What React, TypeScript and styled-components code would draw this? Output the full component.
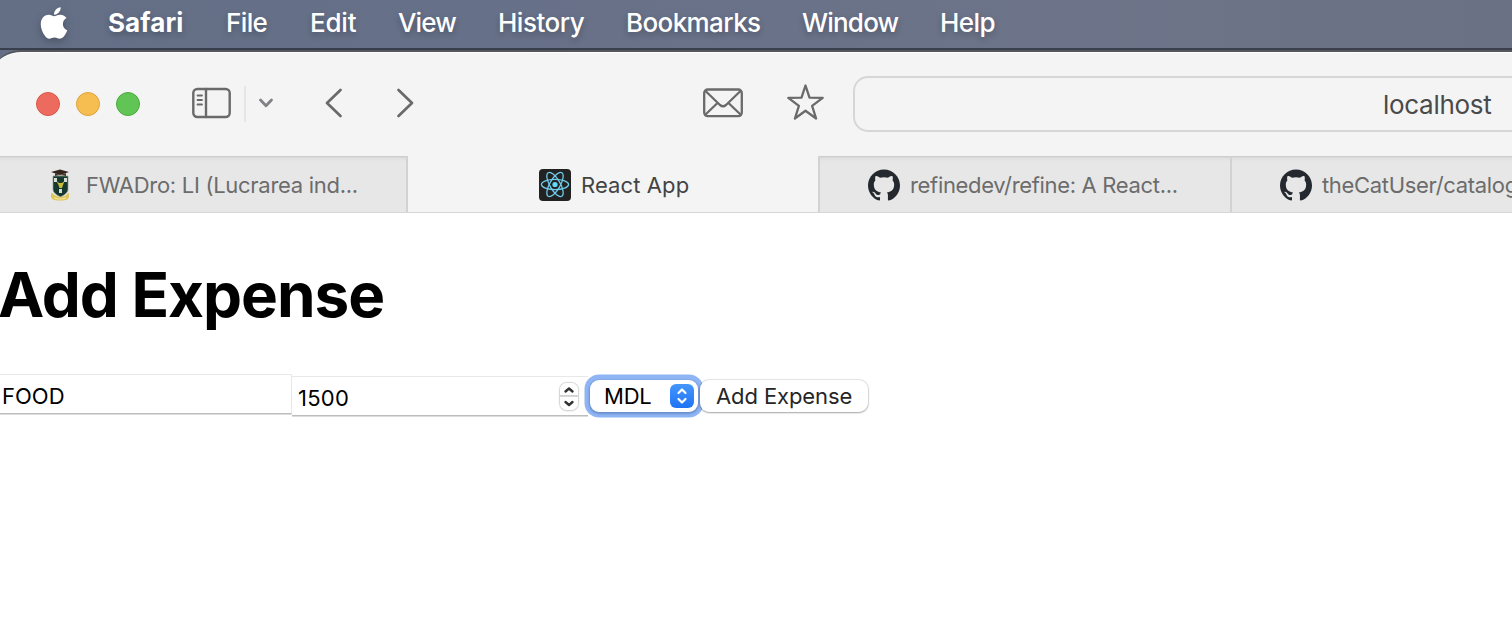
import React from "react";
import styled, { createGlobalStyle } from "styled-components";
import { SiGithub } from "react-icons/si";
import { FaApple } from "react-icons/fa";

const GlobalStyle = createGlobalStyle`
  * { box-sizing: border-box; }
  html, body { margin: 0; padding: 0; overflow: hidden; }
  body { background: #fff; font-family: Inter, "Liberation Sans", sans-serif; }
`;

const Screen = styled.div`
  width: 100%;
  height: 622px;
  overflow: hidden;
  display: flex;
  flex-direction: column;
  background: #fff;
`;

const Desktop = styled.div`
  flex: none;
  background: linear-gradient(90deg, #646f86 0%, #667088 30%, #6d7489 70%, #6b7184 100%);
`;

const MenuBar = styled.nav`
  height: 50px;
  display: flex;
  align-items: flex-start;
  padding: 0 0 0 40px;
  color: #fff;
  box-shadow: inset 0 -2px 0 rgba(20, 22, 30, 0.55);
`;

const AppleMark = styled.span`
  width: 68px;
  padding-top: 5px;
  filter: drop-shadow(0 3px 4px rgba(0, 0, 0, 0.25));
  svg { display: block; margin-left: -4px; }
`;

const MenuItem = styled.span<{ $w: number; $ls?: number; $bold?: boolean }>`
  width: ${(p) => p.$w}px;
  flex: none;
  font-size: 26px;
  line-height: 46px;
  white-space: nowrap;
  font-weight: ${(p) => (p.$bold ? 700 : 500)};
  letter-spacing: ${(p) => p.$ls ?? 0}px;
  text-shadow: 0 3px 6px rgba(0, 0, 0, 0.25);
`;

const WindowTop = styled.header`
  margin-left: -4px;
  padding-left: 4px;
  height: 106px;
  background: #f4f4f4;
  border-top: 2px solid #55575c;
  border-top-left-radius: 26px 18px;
  box-shadow: inset 0 1px 0 #fff;
  display: flex;
  align-items: center;
`;

const Lights = styled.div`
  flex: none;
  display: flex;
  gap: 16px;
  margin-left: 36px;
  width: 156px;
`;

const Light = styled.i<{ $fill: string; $edge: string }>`
  width: 24px;
  height: 24px;
  border-radius: 50%;
  background: ${(p) => p.$fill};
  border: 1px solid ${(p) => p.$edge};
`;

const ToolIcon = styled.svg<{ $gap?: number; $lift?: number; $soft?: boolean }>`
  flex: none;
  display: block;
  margin-left: ${(p) => p.$gap ?? 0}px;
  margin-bottom: ${(p) => p.$lift ?? 2}px;
  fill: none;
  stroke: ${(p) => (p.$soft ? "#828286" : "#6a6a6a")};
  stroke-linecap: round;
  stroke-linejoin: round;
`;

const Divider = styled.i`
  flex: none;
  width: 2px;
  height: 36px;
  margin-left: 13px;
  background: #e6e6e6;
`;

const AddressBar = styled.div`
  flex: none;
  width: 1200px;
  height: 56px;
  margin-left: 28px;
  border: 2px solid #d6d6d6;
  border-radius: 15px;
  padding-left: 528px;
  font-size: 26px;
  line-height: 54px;
  letter-spacing: -0.3px;
  color: #4a4a4a;
`;

const TabStrip = styled.div`
  flex: none;
  height: 57px;
  display: flex;
  border-bottom: 1px solid #d6d6d6;
  background: #f4f4f4;
`;

const Tab = styled.div<{ $w: number; $pad: number; $gap: number; $active?: boolean; $edge?: boolean }>`
  flex: none;
  width: ${(p) => p.$w}px;
  padding: 2px 0 0 ${(p) => p.$pad}px;
  display: flex;
  align-items: center;
  gap: ${(p) => p.$gap}px;
  background: ${(p) =>
    p.$active ? "#f4f4f4" : "linear-gradient(#c6c6c6 0, #d4d4d4 1px, #dedede 2px, #e4e4e4 4px, #e7e7e7 7px)"};
  border-right: ${(p) => (p.$edge ? "2px solid #d2d2d2" : "none")};
  color: ${(p) => (p.$active ? "#434343" : "#6c6c6c")};
  svg { flex: none; display: block; }
`;

const TabTitle = styled.span<{ $ls?: number }>`
  font-size: 22px;
  line-height: 54px;
  white-space: nowrap;
  letter-spacing: ${(p) => p.$ls ?? 0}px;
`;

const Page = styled.main`
  flex: 1;
  background: #fff;
  color: #000;
`;

const Title = styled.h1`
  margin: 42px 0 39px -2px;
  height: 80px;
  font-size: 62px;
  line-height: 80px;
  font-weight: 700;
  letter-spacing: -1.05px;
`;

const Form = styled.form`
  display: flex;
  align-items: flex-start;
`;

const Field = styled.div<{ $w: number; $drop: number; $pad: number; $open?: boolean }>`
  flex: none;
  width: ${(p) => p.$w}px;
  height: 40px;
  margin-top: ${(p) => p.$drop}px;
  padding-left: ${(p) => p.$pad}px;
  padding-right: 10px;
  display: flex;
  align-items: center;
  justify-content: space-between;
  border-top: 1px solid #e8e8e8;
  border-right: ${(p) => (p.$open ? "none" : "1px solid #e8e8e8")};
  border-bottom: 1px solid #bdbdbd;
  box-shadow: 0 1px 0 #dcdcdc;
  font-size: 22px;
  line-height: 37px;
`;

const FieldText = styled.span<{ $ls: number }>`
  padding-top: 5px;
  letter-spacing: ${(p) => p.$ls}px;
`;

const Stepper = styled.span`
  width: 18px;
  height: 27px;
  margin-top: 1px;
  border-radius: 7px;
  background: linear-gradient(#fff 12px, #cfcfcf 12px, #dcdcdc 14px, #fff 14px);
  box-shadow: 0 0 1px 1px #d4d4d4, 0 1px 2px rgba(0, 0, 0, 0.15);
  svg { display: block; }
`;

const Select = styled.div`
  flex: none;
  position: relative;
  z-index: 1;
  width: 108px;
  height: 32px;
  margin: 6px 0 0 2px;
  padding: 0 4px 0 14px;
  display: flex;
  align-items: center;
  justify-content: space-between;
  border-radius: 9px;
  background: #fff;
  box-shadow: 0 1px 2px 1px rgba(30, 60, 120, 0.3), 0 0 0 5.5px #8fb5f5;
  font-size: 22px;
  letter-spacing: -0.2px;
`;

const SelectArrows = styled.span`
  width: 24px;
  height: 24px;
  border-radius: 6px;
  background: linear-gradient(#4596fb, #1f74f4);
  svg { display: block; }
`;

const Submit = styled.div`
  flex: none;
  position: relative;
  z-index: 2;
  width: 168px;
  height: 32px;
  margin: 6px 0 0 2px;
  padding-left: 16px;
  border-radius: 9px;
  background: #fff;
  box-shadow: 0 0 1px 1px rgba(0, 0, 0, 0.1), 0 1px 2px rgba(0, 0, 0, 0.28);
  font-size: 22px;
  line-height: 32px;
  letter-spacing: -0.1px;
  white-space: nowrap;
  color: #262626;
`;

const menus = [
  { label: "Safari", w: 118, ls: 0.1, bold: true },
  { label: "File", w: 84, ls: -0.6 },
  { label: "Edit", w: 88, ls: -0.2 },
  { label: "View", w: 100, ls: -0.9 },
  { label: "History", w: 128, ls: -0.5 },
  { label: "Bookmarks", w: 176, ls: -0.6 },
  { label: "Window", w: 138, ls: -0.8 },
  { label: "Help", w: 80, ls: -0.6 },
];

const Crest = () => (
  <svg width="20" height="32" viewBox="0 0 20 32">
    <path d="M3 7h15v13c0 4-4 6-7.500 8C7 26 3 24 3 20z" fill="#17382c" stroke="#8e9b93" strokeWidth=".7" />
    <path d="M1 3l9-2.500L19 3l-9 3z" fill="#33251c" />
    <path d="M5 4v3c3-1 8-1 11 0V4l-6 2z" fill="#4b382c" />
    <path d="M4 9h3v4H4zM14 9h3v4h-3zM9 20h3v4H9z" fill="#d5ddd7" />
    <path d="M6.500 12l2.500 2h3l2.500-2-1.500 4-1 3H9.500l-1-3z" fill="#c9bd3c" />
    <path d="M1 24c2 0 3 2 5 3s7 1 9 0 2-3 4-3v4l-1 2c-3 2-13 2-16 0l-1-2z" fill="#dfc65a" />
    <path d="M4 29q6.500 2 12 0" stroke="#f6e9a4" strokeWidth="1.200" fill="none" />
  </svg>
);

const ReactMark = () => (
  <svg width="32" height="32" viewBox="0 0 32 32">
    <rect width="32" height="32" rx="4" fill="#222" />
    <circle cx="16" cy="15.500" r="2.600" fill="#61dafb" />
    <g fill="none" stroke="#6fcdec" strokeWidth="1.300">
      <ellipse cx="16" cy="15.500" rx="13.600" ry="5.200" />
      <ellipse cx="16" cy="15.500" rx="13.600" ry="5.200" transform="rotate(60 16 15.500)" />
      <ellipse cx="16" cy="15.500" rx="13.600" ry="5.200" transform="rotate(120 16 15.500)" />
    </g>
  </svg>
);

export default function App() {
  return (
    <Screen>
      <GlobalStyle />
      <Desktop>
        <MenuBar>
          <AppleMark>
            <FaApple size={36} />
          </AppleMark>
          {menus.map((m) => (
            <MenuItem key={m.label} $w={m.w} $ls={m.ls} $bold={m.bold}>
              {m.label}
            </MenuItem>
          ))}
        </MenuBar>
        <WindowTop>
          <Lights>
            <Light $fill="#ed6a5f" $edge="#dc5549" />
            <Light $fill="#f6be50" $edge="#dfa33b" />
            <Light $fill="#61c555" $edge="#4eaa3e" />
          </Lights>
          <ToolIcon width="39" height="32" viewBox="0 0 39 32" strokeWidth="2.400">
            <rect x="1.300" y="2" width="36.400" height="28" rx="4" />
            <path d="M14 2v28" />
            <path d="M5.500 8.500h4.500M5.500 13h4.500M5.500 17.500h4.500" strokeWidth="1.800" />
          </ToolIcon>
          <Divider />
          <ToolIcon $gap={12} $soft width="16" height="12" viewBox="0 0 16 12" strokeWidth="2.800">
            <path d="M2.500 3L8 8.700 13.500 3" />
          </ToolIcon>
          <ToolIcon $gap={50} width="20" height="32" viewBox="0 0 20 32" strokeWidth="2.700">
            <path d="M16.500 3L3 16l13.500 13" />
          </ToolIcon>
          <ToolIcon $gap={51} width="20" height="32" viewBox="0 0 20 32" strokeWidth="2.700">
            <path d="M3.500 3L17 16 3.500 29" />
          </ToolIcon>
          <ToolIcon $gap={288} width="40" height="30" viewBox="0 0 40 30" strokeWidth="2.300">
            <rect x="1.200" y="1.500" width="37.600" height="26.600" rx="3.500" />
            <path d="M2.500 3l14.500 14q3 2.500 6 0L37.500 3M2.500 26.500L14 15.500M37.500 26.500L26 15.500" />
          </ToolIcon>
          <ToolIcon $gap={44} $lift={4} width="38" height="38" viewBox="0 0 38 38" strokeWidth="2.300">
            <path d="M18.500 2.500l4 12.200 13.200.2-10.600 8 4 12.600-10.600-7.700-10.600 7.700 4-12.600-10.600-8 13.200-.2z" />
          </ToolIcon>
          <AddressBar>localhost</AddressBar>
        </WindowTop>
      </Desktop>
      <TabStrip>
        <Tab $w={408} $pad={50} $gap={16} $edge>
          <Crest />
          <TabTitle $ls={-0.29}>FWADro: LI (Lucrarea ind...</TabTitle>
        </Tab>
        <Tab $w={412} $pad={131} $gap={10} $active $edge>
          <ReactMark />
          <TabTitle $ls={0.1}>React App</TabTitle>
        </Tab>
        <Tab $w={412} $pad={48} $gap={10} $edge>
          <SiGithub size={32} color="#24292f" />
          <TabTitle $ls={-0.33}>refinedev/refine: A React...</TabTitle>
        </Tab>
        <Tab $w={412} $pad={48} $gap={10}>
          <SiGithub size={32} color="#24292f" />
          <TabTitle $ls={-0.33}>theCatUser/catalog</TabTitle>
        </Tab>
      </TabStrip>
      <Page>
        <Title>Add Expense</Title>
        <Form>
          <Field $w={292} $drop={0} $pad={2}>
            <FieldText $ls={0}>FOOD</FieldText>
          </Field>
          <Field $w={296} $drop={2} $pad={6} $open>
            <FieldText $ls={0.25}>1500</FieldText>
            <Stepper>
              <svg width="18" height="27" viewBox="0 0 18 27" fill="none" stroke="#333" strokeWidth="2.400" strokeLinecap="round" strokeLinejoin="round">
                <path d="M5.500 8.500L9 5.500l3.500 3M5.500 19L9 22l3.500-3" />
              </svg>
            </Stepper>
          </Field>
          <Select>
            MDL
            <SelectArrows>
              <svg width="24" height="24" viewBox="0 0 24 24" fill="none" stroke="#fff" strokeWidth="2.200" strokeLinecap="round" strokeLinejoin="round">
                <path d="M8.500 9L12 5.500 15.500 9M8.500 15l3.500 3.500 3.500-3.500" />
              </svg>
            </SelectArrows>
          </Select>
          <Submit>Add Expense</Submit>
        </Form>
      </Page>
    </Screen>
  );
}
